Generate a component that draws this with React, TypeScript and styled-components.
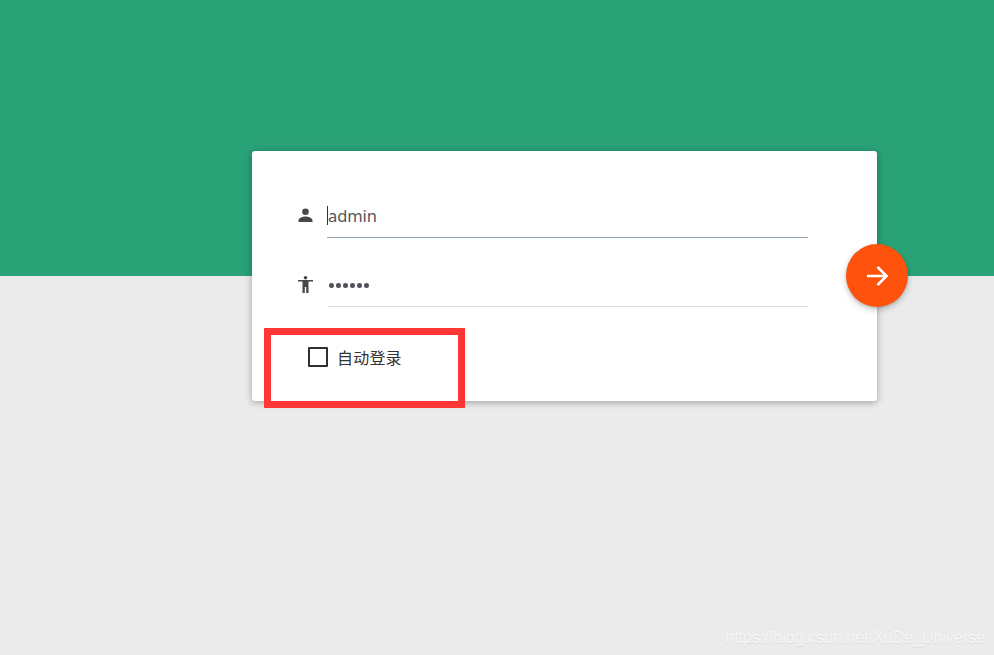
import React from "react"
import styled, { createGlobalStyle } from "styled-components"

const GlobalStyle = createGlobalStyle`
	html, body {
		margin: 0;
		padding: 0;
		height: 100%;
		background: #ebebeb;
		font-family: "Noto Sans", "Noto Sans CJK SC", sans-serif;
	}
`

const Page = styled.div`
	position: relative;
	width: 994px;
	height: 655px;
	overflow: hidden;
	background: #ebebeb;
`

const Banner = styled.div`
	height: 276px;
	background: #2aa277;
`

const Stage = styled.div`
	margin: -125px 0 0 252px;
	width: 625px;
	position: relative;
`

const Card = styled.form`
	box-sizing: border-box;
	width: 625px;
	height: 250px;
	padding: 39px 69px 0 46px;
	background: #fff;
	border-radius: 3px;
	box-shadow: 0 2px 6px rgba(0, 0, 0, 0.22), 0 0 12px rgba(0, 0, 0, 0.1);
`

const Row = styled.div`
	display: flex;
	align-items: center;
	height: 47px;
	margin-bottom: 22px;
`

const IconSlot = styled.div`
	width: 15px;
	height: 17px;
	margin: 3px 14px 0 0;
	color: #474747;
	display: flex;
	flex-shrink: 0;

	svg {
		width: 15px;
		height: 17px;
		fill: currentColor;
		display: block;
	}
`

const Field = styled.div<{ $active?: boolean }>`
	flex: 1;
	height: 43px;
	padding-top: 4px;
	margin-left: ${(p) => (p.$active ? "0" : "1px")};
	border-bottom: 1px solid ${(p) => (p.$active ? "#8fa7bb" : "#dedede")};
	display: flex;
	align-items: center;
	box-sizing: content-box;
	position: relative;
`

const Caret = styled.span`
	width: 1px;
	height: 19px;
	background: #333;
`

const Value = styled.span`
	font-size: 16.5px;
	letter-spacing: -0.1px;
	color: #565656;
`

const Dots = styled.span`
	display: flex;
	gap: 2.4px;
	margin: 3px 0 0 1px;
`

const Dot = styled.i`
	width: 4.6px;
	height: 4.6px;
	border-radius: 50%;
	background: #55505a;
`

const Remember = styled.label`
	display: flex;
	align-items: center;
	margin: 39px 0 0 10px;
`

const Box = styled.span`
	box-sizing: border-box;
	width: 20px;
	height: 20px;
	border: 2px solid #303030;
	border-radius: 1px;
	margin-right: 9px;
`

const RememberText = styled.span`
	font-family: "Noto Sans CJK SC", sans-serif;
	font-size: 16px;
	letter-spacing: 0.2px;
	color: #333;
`

const Fab = styled.button`
	position: absolute;
	top: 93px;
	right: -31px;
	width: 62px;
	height: 63px;
	padding: 0;
	border: none;
	border-radius: 50%;
	background: #ff530d;
	color: #fff;
	display: flex;
	align-items: center;
	justify-content: center;
	box-shadow: 0 3px 6px rgba(0, 0, 0, 0.2), 0 1px 3px rgba(0, 0, 0, 0.14);
`

const Highlight = styled.div`
	position: absolute;
	left: 264px;
	top: 328px;
	width: 201px;
	height: 80px;
	box-sizing: border-box;
	border: 7px solid #ff3636;
`

const Watermark = styled.div`
	position: absolute;
	right: 9px;
	bottom: 8px;
	font-family: "Liberation Sans", sans-serif;
	font-size: 16px;
	color: rgba(255, 255, 255, 0.72);
	text-shadow: 0 1px 1px rgba(0, 0, 0, 0.08);
`

const App = () => {
	return (
		<Page>
			<GlobalStyle />
			<Banner />
			<Stage>
				<Card>
					<Row>
						<IconSlot>
							<svg viewBox="0 0 15 17">
								<circle cx="7.5" cy="4.800" r="3.300" />
								<path d="M.5 15v-1.600c0-2.600 4.600-3.900 7-3.900s7 1.300 7 3.900V15z" />
							</svg>
						</IconSlot>
						<Field $active>
							<Caret />
							<Value>admin</Value>
						</Field>
					</Row>
					<Row>
						<IconSlot>
							<svg viewBox="0 0 15 17">
								<circle cx="7.5" cy="1.800" r="1.800" />
								<path d="M0 4h15v1.600h-4.500V17H8.200v-6H6.800v6H4.500V5.600H0z" />
							</svg>
						</IconSlot>
						<Field>
							<Dots>
								{Array.from({ length: 6 }).map((_, i) => (
									<Dot key={i} />
								))}
							</Dots>
						</Field>
					</Row>
					<Remember>
						<Box />
						<RememberText>自动登录</RememberText>
					</Remember>
				</Card>
				<Fab type="button">
					<svg width="24" height="24" viewBox="0 0 24 24" fill="none" stroke="currentColor" strokeWidth="2.600">
						<path d="M2 12h19M12.500 3l9 9-9 9" />
					</svg>
				</Fab>
			</Stage>
			<Highlight />
			<Watermark>https://blog.csdn.net/XuDe_Universe</Watermark>
		</Page>
	)
}

export default App
